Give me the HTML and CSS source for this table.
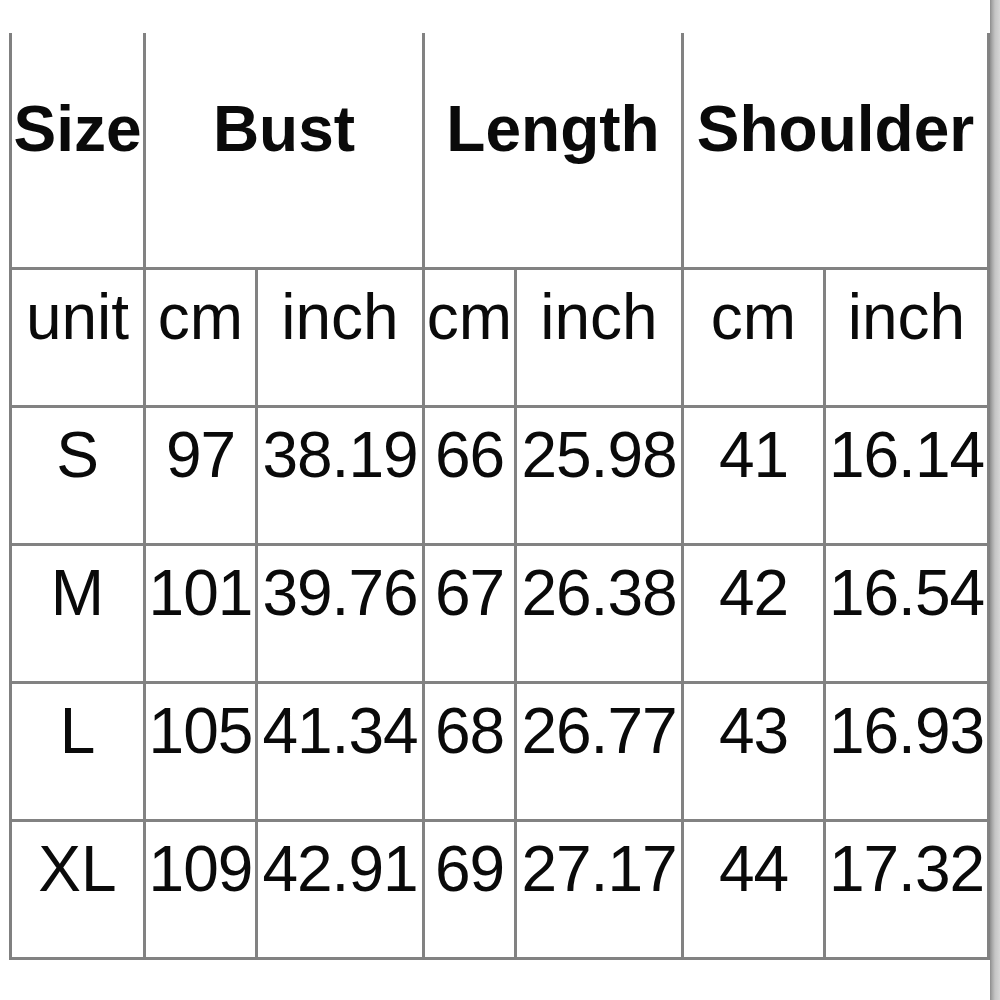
FILE: index.html
```html
<!DOCTYPE html>
<html lang="en">
<head>
<meta charset="utf-8">
<title>Size chart</title>
<link rel="stylesheet" href="styles.css">
</head>
<body>
<div class="page">
  <div class="sheet">
    <div class="chart">
      <div class="cell head">Size</div>
      <div class="cell head span2">Bust</div>
      <div class="cell head span2">Length</div>
      <div class="cell head span2">Shoulder</div>

      <div class="cell">unit</div>
      <div class="cell">cm</div>
      <div class="cell">inch</div>
      <div class="cell">cm</div>
      <div class="cell">inch</div>
      <div class="cell">cm</div>
      <div class="cell">inch</div>

      <div class="cell">S</div>
      <div class="cell num">97</div>
      <div class="cell num">38.19</div>
      <div class="cell num">66</div>
      <div class="cell num">25.98</div>
      <div class="cell num">41</div>
      <div class="cell num">16.14</div>

      <div class="cell">M</div>
      <div class="cell num">101</div>
      <div class="cell num">39.76</div>
      <div class="cell num">67</div>
      <div class="cell num">26.38</div>
      <div class="cell num">42</div>
      <div class="cell num">16.54</div>

      <div class="cell">L</div>
      <div class="cell num">105</div>
      <div class="cell num">41.34</div>
      <div class="cell num">68</div>
      <div class="cell num">26.77</div>
      <div class="cell num">43</div>
      <div class="cell num">16.93</div>

      <div class="cell">XL</div>
      <div class="cell num">109</div>
      <div class="cell num">42.91</div>
      <div class="cell num">69</div>
      <div class="cell num">27.17</div>
      <div class="cell num">44</div>
      <div class="cell num">17.32</div>
    </div>
  </div>
  <div class="edge"></div>
</div>
</body>
</html>
```

FILE: styles.css
```css
html, body {
  margin: 0;
  padding: 0;
  background: #ffffff;
}

.page {
  display: flex;
  width: 1000px;
  height: 1000px;
  overflow: hidden;
}

.sheet {
  width: 990px;
  flex: none;
  padding-top: 33px;
  padding-left: 9px;
  box-sizing: border-box;
}

.edge {
  width: 10px;
  height: 1000px;
  flex: none;
  background: linear-gradient(to right, #8c8c8c 0, #a6a6a6 20%, #c4c4c4 50%, #d6d6d6 100%);
}

.chart {
  display: grid;
  grid-template-columns: 134px 112px 167px 92px 167px 142px 164px;
  grid-template-rows: 237px 138px 138px 138px 138px 138px;
  border-left: 3px solid #808080;
  width: max-content;
}

.cell {
  box-sizing: border-box;
  border-right: 3px solid #828282;
  border-bottom: 3px solid #828282;
  font-family: "Liberation Sans", Arial, sans-serif;
  font-size: 64px;
  line-height: 64px;
  color: #0a0a0a;
  text-align: center;
  white-space: nowrap;
  padding-top: 15px;
  overflow: visible;
}

.num {
  letter-spacing: -1px;
}

.head {
  font-weight: bold;
  padding-top: 64px;
}

.span2 {
  grid-column: span 2;
}
```
